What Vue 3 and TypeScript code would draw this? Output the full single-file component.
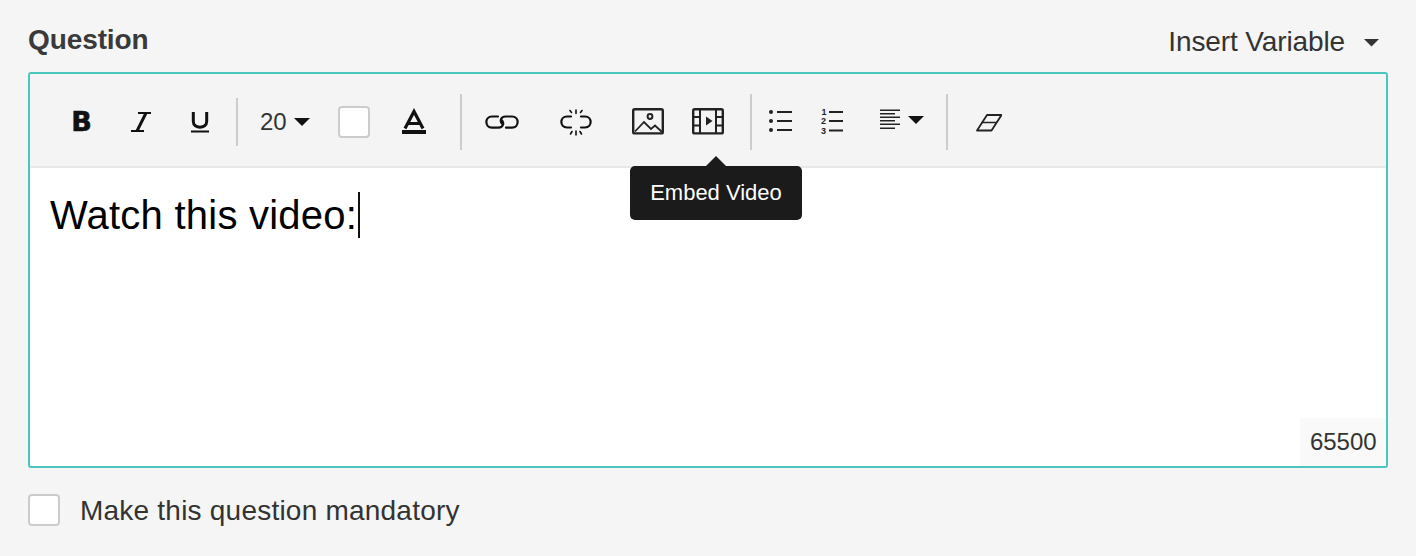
<script setup lang="ts">
const question: string = 'Watch this video:'
const remaining: number = 65500
</script>

<template>
  <div class="page">
    <header class="head">
      <h2 class="title">Question</h2>
      <div class="insert">
        <span>Insert Variable</span>
        <svg class="insert-caret" width="15" height="8" viewBox="0 0 15 8"><path d="M0 0H15L7.5 7.5Z" fill="#333" /></svg>
      </div>
    </header>

    <section class="box">
      <div class="toolbar">
        <div class="tool tool-b"><span class="bold-b">B</span></div>
        <div class="tool">
          <svg width="20" height="40" viewBox="130 100 20 40" fill="none" stroke="#111" stroke-width="2">
            <path d="M137 113H150M130 131H143" /><path d="M145 113L136 131" stroke-width="3" />
          </svg>
        </div>
        <div class="tool">
          <svg width="18" height="40" viewBox="190 100 18 40" fill="none" stroke="#111">
            <path d="M192.300 112V121.500C192.300 129 205.700 129 205.700 121.500V112" stroke-width="3" /><path d="M190 131.500H208" stroke-width="2" />
          </svg>
        </div>
        <div class="sep short s1"></div>
        <div class="size"><span>20</span><svg width="16" height="8" viewBox="0 0 16 8"><path d="M0 0H16L8 8Z" fill="#111" /></svg></div>
        <div class="swatch"></div>
        <svg class="t-color" width="24" height="40" viewBox="402 100 24 40" fill="none" stroke="#111">
          <path d="M405 128.500L414 111.500L423 128.500M408 123.500H420" stroke-width="3.200" /><path d="M402 132H426" stroke-width="4" />
        </svg>
        <div class="sep s2"></div>
        <svg class="t-link" width="34" height="40" viewBox="485 100 34 40" fill="none" stroke="#111" stroke-width="2.200" stroke-linecap="round">
          <path d="M498 116.500H492C484.500 116.500 484.500 127.700 492 127.700H498.500C503.500 127.700 504.500 122.500 501.500 120" />
          <path d="M506 127.700H512C519.500 127.700 519.500 116.500 512 116.500H505.500C500.500 116.500 499.500 121.700 502.500 124.200" />
        </svg>
        <svg class="t-unlink" width="32" height="40" viewBox="560 100 32 40" fill="none" stroke="#111" stroke-width="2.200" stroke-linecap="round">
          <path d="M571 116.500H567C559.500 116.500 559.500 127.500 567 127.500H571M581 116.500H585C592.500 116.500 592.500 127.500 585 127.500H581" />
          <path d="M576 110V113.500M570 110.500L571.500 112.500M582 110.500L580.500 112.500M576 131V135M570.500 134L572 131.500M581.500 134L580 131.500" stroke-width="1.600" />
        </svg>
        <svg class="t-image" width="32" height="40" viewBox="632 100 32 40" fill="none" stroke="#222" stroke-width="2.400">
          <rect x="633.200" y="109.200" width="29.600" height="24.200" rx="1.500" />
          <circle cx="650" cy="116.500" r="2.400" stroke-width="2" />
          <path d="M635 131.500L644 122L651 129L655 125.500L662 132" stroke-width="1.800" />
        </svg>
        <svg class="t-video" width="32" height="40" viewBox="692 100 32 40" fill="none" stroke="#222" stroke-width="2.400">
          <rect x="693.200" y="109.200" width="29.600" height="24.200" rx="1.500" />
          <path d="M700 109V133.500M716 109V133.500M693 117H700M693 125.500H700M716 117H723M716 125.500H723" stroke-width="2" />
          <path d="M706 116.500L712.500 121L706 125.500Z" fill="#222" stroke="none" />
        </svg>
        <div class="sep s3"></div>
        <svg class="t-ul" width="24" height="40" viewBox="769 100 24 40" fill="#222">
          <circle cx="771" cy="112" r="2" /><circle cx="771" cy="121" r="2" /><circle cx="771" cy="130" r="2" />
          <path d="M777 111H792V113H777ZM777 120H792V122H777ZM777 129H792V131H777Z" />
        </svg>
        <svg class="t-ol" width="24" height="40" viewBox="820 100 24 40" fill="#222">
          <text x="824" y="115" class="num" text-anchor="middle">1</text>
          <text x="823.500" y="124" class="num" text-anchor="middle">2</text>
          <text x="823.500" y="133.500" class="num" text-anchor="middle">3</text>
          <path d="M829 111H843V113H829ZM829 120H843V122H829ZM829 129.500H843V131.500H829Z" />
        </svg>
        <div class="align">
          <svg width="20" height="40" viewBox="880 100 20 40" fill="#222">
            <path d="M880 109.500H900V111H880ZM880 113H895V114.500H880ZM880 116.500H900V118H880ZM880 120H895V121.500H880ZM880 123.500H900V125H880ZM880 127.500H895V129H880Z" />
          </svg>
          <svg width="16" height="8" viewBox="0 0 16 8"><path d="M0 0H16L8 8Z" fill="#111" /></svg>
        </div>
        <div class="sep s4"></div>
        <svg class="t-eraser" width="26" height="40" viewBox="976 100 26 40" fill="none" stroke="#222" stroke-width="1.800" stroke-linejoin="round">
          <path d="M987 115H1001.500L991.500 130.500H977Z" /><path d="M981.500 122.500H996.500" stroke-width="1.500" />
        </svg>
      </div>

      <div class="editor">
        <p class="content">{{ question }}<span class="cursor"></span></p>
        <div class="counter">{{ remaining }}</div>
      </div>

      <div class="tooltip">
        <span class="tip-arrow"></span>
        Embed Video
      </div>
    </section>

    <label class="mandatory">
      <span class="check"></span>
      <span class="mandatory-text">Make this question mandatory</span>
    </label>
  </div>
</template>

<style>
html, body { margin: 0; background: #f5f5f5; }
</style>

<style scoped>
.page {
  box-sizing: border-box;
  width: 1416px;
  height: 556px;
  padding: 0 28px;
  background: #f5f5f5;
  color: #333;
  font-family: "Liberation Sans", Arial, sans-serif;
}
.head {
  height: 72px;
  display: flex;
  align-items: center;
  justify-content: space-between;
  padding-right: 9px;
  box-sizing: border-box;
  padding-top: 12px;
}
.title {
  margin: -4px 0 0;
  font-size: 28px;
  line-height: 32px;
  font-weight: 700;
  color: #3a3a3a;
  letter-spacing: -0.1px;
}
.insert {
  display: flex;
  align-items: center;
  gap: 19px;
  font-size: 28px;
  letter-spacing: -0.12px;
}
.insert-caret { margin-top: 2px; }
.box {
  position: relative;
  box-sizing: border-box;
  height: 396px;
  border: 2px solid #4ac6bf;
  border-radius: 3px;
  background: #fff;
}
.toolbar {
  box-sizing: border-box;
  height: 94px;
  padding: 0 0 0 22px;
  display: flex;
  align-items: center;
  background: #f4f4f4;
  border-bottom: 2px solid #e8e8e8;
}
.tool {
  width: 59px;
  display: flex;
  justify-content: center;
  flex: none;
}
.bold-b {
  font-family: "DejaVu Sans", sans-serif;
  font-weight: 700;
  font-size: 27px;
  line-height: 40px;
  color: #111;
  padding-top: 3px;
  -webkit-text-stroke: 0.6px #111;
}
.sep {
  flex: none;
  width: 2px;
  height: 56px;
  margin-top: 4px;
  background: #ccc;
}
.sep.short { height: 48px; }
.s1 { margin-left: 7px; }
.s2 { margin-left: 34px; }
.s3 { margin-left: 26px; }
.s4 { margin-left: 22px; }
.size {
  margin-left: 22px;
  display: flex;
  align-items: center;
  gap: 7px;
  font-size: 24px;
  margin-top: 4px;
}
.swatch {
  box-sizing: border-box;
  margin-left: 28px;
  margin-top: 4px;
  width: 32px;
  height: 32px;
  background: #fff;
  border: 2px solid #ccc;
  border-radius: 4px;
}
.t-color { margin-left: 32px; }
.t-link { margin-left: 23px; }
.t-unlink { margin-left: 41px; }
.t-image { margin-left: 40px; }
.t-video { margin-left: 28px; }
.t-ul { margin-left: 17px; }
.t-ol { margin-left: 27px; }
.t-eraser { margin-left: 28px; }
.num { font-size: 9px; font-weight: 700; font-family: "Liberation Sans", sans-serif; }
.align {
  margin-left: 36px;
  display: flex;
  align-items: center;
  gap: 8px;
}
.editor {
  position: relative;
  height: 298px;
  box-sizing: border-box;
  padding: 22px 20px;
}
.content {
  margin: 0;
  font-size: 40px;
  line-height: 50px;
  color: #000;
  letter-spacing: 0.24px;
}
.cursor {
  display: inline-block;
  width: 2px;
  height: 46px;
  margin-left: 1px;
  background: #111;
  vertical-align: -9px;
}
.counter {
  position: absolute;
  right: 0;
  bottom: 0;
  box-sizing: border-box;
  width: 86px;
  height: 48px;
  padding-left: 10px;
  line-height: 48px;
  font-size: 24px;
  background: #f9f9f9;
  color: #333;
  letter-spacing: -0.05px;
}
.tooltip {
  position: absolute;
  left: 600px;
  top: 92px;
  width: 172px;
  height: 54px;
  border-radius: 5px;
  background: #1b1b1b;
  color: #fff;
  font-size: 22px;
  line-height: 54px;
  text-align: center;
}
.tip-arrow {
  position: absolute;
  left: 76px;
  top: -10px;
  width: 0;
  height: 0;
  border-left: 10px solid transparent;
  border-right: 10px solid transparent;
  border-bottom: 10px solid #1b1b1b;
}
.mandatory {
  margin-top: 25px;
  display: flex;
  align-items: center;
  gap: 20px;
  font-size: 28px;
}
.mandatory-text {
  letter-spacing: 0.22px;
  padding-top: 2px;
}
.check {
  box-sizing: border-box;
  width: 32px;
  height: 32px;
  background: #fff;
  border: 2px solid #ccc;
  border-radius: 4px;
}
</style>
